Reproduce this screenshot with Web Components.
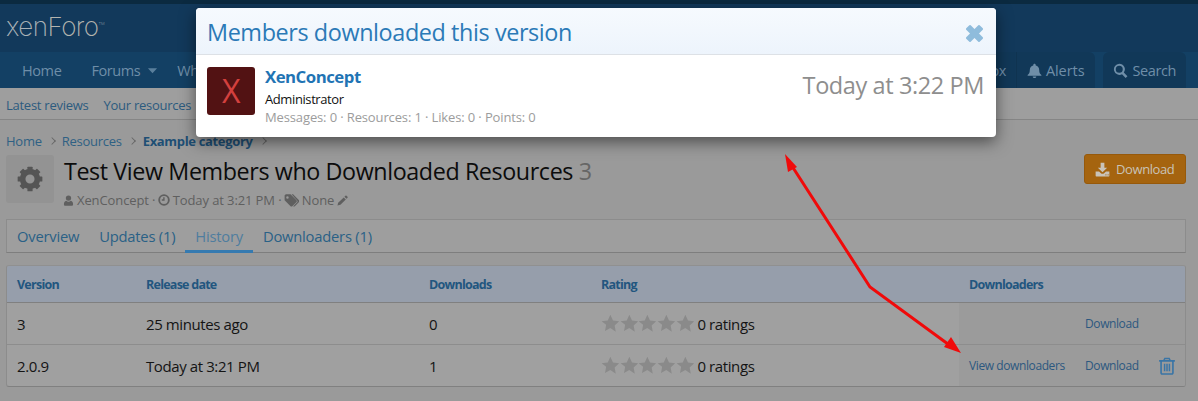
<!DOCTYPE html>
<html lang="en">
<head>
<meta charset="utf-8">
<title>Test View Members who Downloaded Resources</title>
<style>
  html, body { margin: 0; height: 401px; overflow: hidden; background: #9a9a9a; }
  body { font-family: "Open Sans", "Noto Sans", sans-serif; letter-spacing: -0.025em; color: #141414; position: relative; }
</style>
</head>
<body>
<xf-header></xf-header>
<xf-subnav><a>Latest reviews</a><a>Your resources</a></xf-subnav>
<xf-crumbs></xf-crumbs>
<xf-title-bar></xf-title-bar>
<xf-tabs></xf-tabs>
<xf-history>
  <xf-row version="3" date="25 minutes ago" downloads="0"></xf-row>
  <xf-row version="2.0.9" date="Today at 3:21 PM" downloads="1" viewers trash></xf-row>
</xf-history>
<xf-modal title-text="Members downloaded this version">
  <xf-member name="XenConcept" role="Administrator" stats="Messages: 0 · Resources: 1 · Likes: 0 · Points: 0" when="Today at 3:22 PM"></xf-member>
</xf-modal>
<xf-arrows></xf-arrows>

<script>
const ICONS = {
  times: '<rect x="8" y="0" width="8" height="24" rx="1.200" transform="rotate(45 12 12)"/><rect x="8" y="0" width="8" height="24" rx="1.200" transform="rotate(-45 12 12)"/>',
  bell: '<path d="M12 24c1.500 0 2.700-1.100 2.900-2.600H9.100C9.300 22.900 10.500 24 12 24zM23 19.300c-2.600-2.200-3.500-4.800-3.500-8.300 0-3.700-2.300-6.300-5.600-7 .1-.3.1-.5.1-.7C14 2 13.100 1 12 1s-2 1-2 2.300c0 .2 0 .4.1.7-3.300.7-5.600 3.300-5.600 7 0 3.500-.9 6.100-3.500 8.300v1h22z"/>',
  search: '<path fill-rule="evenodd" d="M10 1a9 9 0 0 1 7.300 14.200l5.800 5.800-2.900 2.900-5.800-5.800A9 9 0 1 1 10 1zm0 3.400a5.600 5.600 0 1 0 0 11.200 5.600 5.600 0 0 0 0-11.200z"/>',
  user: '<path d="M12 12.500a5.800 5.800 0 1 0 0-11.600 5.800 5.800 0 0 0 0 11.600zM7.200 12.500C3.500 13 2 16.500 2 20.500 2 22.500 3.300 23.500 5 23.500h14c1.700 0 3-1 3-3 0-4-1.500-7.500-5.200-8-1.200 1.200-2.800 2-4.800 2s-3.600-.8-4.800-2z"/>',
  clock: '<path fill-rule="evenodd" d="M12 .5a11.500 11.500 0 1 1 0 23 11.500 11.500 0 0 1 0-23zm0 3.700a7.800 7.800 0 1 0 0 15.600 7.800 7.800 0 0 0 0-15.600zM10.400 6.500h2.800v6.800H7.500v-2.800h2.900z"/>',
  tags: '<path fill-rule="evenodd" d="M1 3.500 3 2h7.500L20 11.500c.8.800.8 2 0 2.800l-6.700 6.700c-.8.8-2 .8-2.800 0L1 11.500zM5.500 5a2 2 0 1 0 0 4 2 2 0 0 0 0-4z"/><path d="M13 2h2.500L25 11.500c.8.800.8 2 0 2.800L18.300 21c-.7.700-1.800.8-2.600.2L22 14.900c.8-.8.8-2 0-2.800z" transform="translate(-1 0)"/>',
  pencil: '<path d="M18.500 1.500c.6-.6 1.500-.6 2.100 0l2.400 2.400c.6.600.6 1.500 0 2.100l-2.300 2.300-4.500-4.500zM14.700 5.300l4.500 4.500L7.500 21.500 1 23l1.500-6z"/>',
  download: '<path fill-rule="evenodd" d="M9 1h6v8h4.500L12 16.500 4.500 9H9zM1 15h5.500l3 3c1.400 1.300 3.600 1.300 5 0l3-3H23v7c0 .6-.4 1-1 1H2c-.6 0-1-.4-1-1zm16.500 4.500a1 1 0 1 0 0 2 1 1 0 0 0 0-2zm3.500 0a1 1 0 1 0 0 2 1 1 0 0 0 0-2z"/>',
  trash: '<path fill-rule="evenodd" d="M8.500 1h7l1.500 3h5.500v2.200H21V21c0 1.500-1 2.800-2.500 2.800h-13C4 23.800 3 22.500 3 21V6.200H1.500V4H7zM9.800 3l-.7 1h5.800l-.7-1zM5.200 6.200V21c0 .4.2.7.4.7h12.800c.2 0 .4-.3.4-.7V6.200zM7.800 9h2v10h-2zm3.200 0h2v10h-2zm3.200 0h2v10h-2z"/>',
  star: '<path d="M12 1l3.400 7.300 7.900 1-5.800 5.500 1.500 7.900L12 18l-6.900 3.700 1.500-7.900L.8 9.300l7.900-1z"/>',
  caret: '<path d="M2 7h20L12 18z"/>',
  gear: '<g><circle cx="12" cy="12" r="6.800" fill="none" stroke="currentColor" stroke-width="5.200"/>' +
    [0, 45, 90, 135, 180, 225, 270, 315].map(a => `<rect x="9.600" y="0.600" width="4.800" height="5" rx=".6" transform="rotate(${a} 12 12)"/>`).join('') + '</g>'
};

class XfIcon extends HTMLElement {
  static get observedAttributes() {
    return ['name'];
  }

  constructor() {
    super();
    this.attachShadow({ mode: 'open' });
  }

  attributeChangedCallback() {
    this.render();
  }

  connectedCallback() {
    this.render();
  }

  render() {
    const name = this.getAttribute('name');
    this.shadowRoot.innerHTML = `
      <style>
        :host { display: inline-flex; width: var(--icon-size, 14px); height: var(--icon-size, 14px); flex: none; }
        svg { width: 100%; height: 100%; fill: currentColor; display: block; }
      </style>
      <svg viewBox="0 0 24 24" aria-hidden="true">${ICONS[name] || ''}</svg>`;
  }
}

class XfHeader extends HTMLElement {
  constructor() {
    super();
    this.attachShadow({ mode: 'open' });
  }

  connectedCallback() {
    this.shadowRoot.innerHTML = `
      <style>
        :host { display: block; background: #12395b; border-top: 4px solid #0b2a40; }
        .logo { height: 48px; display: flex; align-items: center; padding-left: 6px; box-sizing: border-box; padding-bottom: 3px;
          font: 200 26px/1 "Inter", "Lato", sans-serif; letter-spacing: -0.02em; color: #a9b1b6; }
        .logo b { font-weight: 200; color: #b4b4ae; }
        .logo sup { font-size: 4px; align-self: flex-start; margin: 18px 0 0 0; letter-spacing: 0; }
        nav { height: 36px; display: flex; align-items: stretch; background: #134064; font-size: 14.500px; color: #6f8ea8; }
        a { display: flex; align-items: center; gap: 8px; }
        .left { display: flex; padding-left: 22px; gap: 30px; }
        .forums { margin-right: -11px; }
        .caret { --icon-size: 11px; color: #5a7f9c; margin-left: -1px; }
        .right { margin-left: auto; display: flex; gap: 8px; padding-right: 12px; }
        .group { display: flex; align-items: center; background: #113858; border-radius: 6px 6px 0 0; padding: 0 10px; gap: 4px; --icon-size: 15px; color: #6f8ea8; }
        .inbox { width: 178px; box-sizing: border-box; justify-content: flex-end; gap: 0; }
        .sep { width: 1px; align-self: stretch; background: #0f3350; margin: 0 10px; }
        .alerts { display: flex; align-items: center; gap: 4px; margin-right: 1px; letter-spacing: -0.005em; }
      </style>
      <div class="logo"><span>xen</span><b>Foro</b><sup>TM</sup></div>
      <nav>
        <div class="left">
          <a>Home</a>
          <a class="forums">Forums <xf-icon class="caret" name="caret"></xf-icon></a>
          <a>What's new</a>
        </div>
        <div class="right">
          <div class="group inbox"><span>Inbox</span><span class="sep"></span><span class="alerts"><xf-icon name="bell"></xf-icon>Alerts</span></div>
          <div class="group"><xf-icon name="search"></xf-icon>Search</div>
        </div>
      </nav>`;
  }
}

class XfSubnav extends HTMLElement {
  constructor() {
    super();
    this.attachShadow({ mode: 'open' });
    this.shadowRoot.innerHTML = `
      <style>
        :host { display: flex; height: 29px; padding: 2px 0 0 6px; align-items: center; gap: 15px;
          background: #9e9e9e; border-bottom: 1px solid #858585; font-size: 13px; letter-spacing: -0.02em; color: #2c5b7e; }
      </style>
      <slot></slot>`;
  }
}

class XfCrumbs extends HTMLElement {
  constructor() {
    super();
    this.attachShadow({ mode: 'open' });
    this.shadowRoot.innerHTML = `
      <style>
        :host { display: flex; align-items: center; height: 18px; margin-top: 12px; padding-left: 6px; gap: 7px; font-size: 13px; color: #2f6184; letter-spacing: -0.02em; }
        span:first-child { margin-right: 1px; letter-spacing: -0.04em; }
        b { color: #1e4f75; letter-spacing: -0.026em; margin-left: 1px; }
        i { font-style: normal; width: 5px; height: 5px; border: solid #666; border-width: 1px 1px 0 0; transform: rotate(45deg) scale(.9); }
      </style>
      <span>Home</span><i></i><span>Resources</span><i></i><b>Example category</b><i></i>`;
  }
}

class XfTitleBar extends HTMLElement {
  constructor() {
    super();
    this.attachShadow({ mode: 'open' });
    this.shadowRoot.innerHTML = `
      <style>
        :host { display: flex; padding: 5px 12px 0 6px; height: 66px; box-sizing: border-box; }
        .box { width: 48px; height: 48px; background: #939393; border-radius: 3px; display: flex; align-items: center; justify-content: center; color: #555; --icon-size: 26px; flex: none; }
        .main { margin-left: 10px; flex: 1; }
        h1 { margin: 0; font-size: 23.300px; font-weight: 400; line-height: 32px; color: #0c0c0c; }
        h1 span { color: #666; }
        .meta { display: flex; align-items: center; gap: 3px; margin: 4px 0 0 -1px; font-size: 13px; letter-spacing: -0.008em; color: #5f5f5f; --icon-size: 12px; white-space: pre; }
        .meta .s { margin-right: -4px; }
        .dl { align-self: flex-start; height: 30px; margin-top: -1px; width: 102px; box-sizing: border-box; background: #a5640f; border: 1px solid #96590b; border-radius: 3px;
          display: flex; align-items: center; gap: 6px; padding-left: 10px; color: #c9c3b8; font-size: 13px; --icon-size: 15px; }
      </style>
      <div class="box"><xf-icon name="gear"></xf-icon></div>
      <div class="main">
        <h1>Test View Members who Downloaded Resources <span>3</span></h1>
        <div class="meta"><xf-icon name="user" style="--icon-size:11px"></xf-icon><span class="s">XenConcept · </span><xf-icon name="clock"></xf-icon><span class="s">Today at 3:21 PM · </span><xf-icon name="tags" style="--icon-size:15px"></xf-icon><span>None</span><xf-icon name="pencil" style="--icon-size:11px"></xf-icon></div>
      </div>
      <div class="dl"><xf-icon name="download"></xf-icon>Download</div>`;
  }
}

class XfTabs extends HTMLElement {
  constructor() {
    super();
    this.attachShadow({ mode: 'open' });
    this.shadowRoot.innerHTML = `
      <style>
        :host { display: flex; margin: 3px 12px 0 6px; height: 34px; box-sizing: border-box; background: #9e9e9e; border: 1px solid #8c8c8c; border-bottom-color: #7e7e7e; font-size: 14.750px; letter-spacing: -0.015em; color: #2a6186; }
        a { display: flex; align-items: center; padding: 2px 10px 0; border-bottom: 3px solid transparent; margin-bottom: -1px; }
        a.on { color: #4f7d9f; border-bottom-color: #357ab0; }
      </style>
      <a>Overview</a><a>Updates (1)</a><a class="on">History</a><a>Downloaders (1)</a>`;
  }
}

const HISTORY_COLS = 'grid-template-columns: 129px 283px 172px 368px 226px;';

class XfHistory extends HTMLElement {
  constructor() {
    super();
    this.attachShadow({ mode: 'open' });
    this.shadowRoot.innerHTML = `
      <style>
        :host { display: block; margin: 12px 12px 0 6px; border: 1px solid #8c8c8c; border-top-color: #909090; border-bottom-color: #808080; border-radius: 3px; background: #a0a0a0; overflow: hidden; }
        .head { display: grid; ${HISTORY_COLS} height: 36px; align-items: center; background: #969eab; border-bottom: 1px solid #808080; font-size: 12.500px; font-weight: 700; letter-spacing: -0.06em; color: #22567f; }
        .head span { padding-left: 10px; }
      </style>
      <div class="head"><span>Version</span><span>Release date</span><span>Downloads</span><span>Rating</span><span>Downloaders</span></div>
      <slot></slot>`;
  }
}

class XfRow extends HTMLElement {
  constructor() {
    super();
    this.attachShadow({ mode: 'open' });
  }

  connectedCallback() {
    const stars = Array(5).fill().map(() => '<xf-icon name="star"></xf-icon>').join('');
    this.shadowRoot.innerHTML = `
      <style>
        :host { display: grid; ${HISTORY_COLS} height: 42px; font-size: 15px; border-bottom: 1px solid #8d8d8d; box-sizing: border-box; color: #141414; }
        :host(:last-child) { border-bottom: 0; height: 41px; }
        .c { display: flex; align-items: center; padding: 1px 0 0 10px; }
        .stars { display: flex; color: #8a8a8a; --icon-size: 18.700px; margin: -2px 3px 0 0; }
        .links { background: #9b9b9b; font-size: 12px; color: #2c5880; padding: 0 0 1px 10px; position: relative; }
        .view { width: 116px; flex: none; }
        .tr { --icon-size: 18px; color: #3a75a6; margin: 1px 0 0 19px; }
      </style>
      <div class="c">${this.getAttribute('version')}</div>
      <div class="c">${this.getAttribute('date')}</div>
      <div class="c">${this.getAttribute('downloads')}</div>
      <div class="c"><span class="stars">${stars}</span>0 ratings</div>
      <div class="c links">
        <span class="view">${this.hasAttribute('viewers') ? 'View downloaders' : ''}</span>
        <span>Download</span>
        ${this.hasAttribute('trash') ? '<xf-icon class="tr" name="trash"></xf-icon>' : ''}
      </div>`;
  }
}

class XfModal extends HTMLElement {
  constructor() {
    super();
    this.attachShadow({ mode: 'open' });
  }

  connectedCallback() {
    this.shadowRoot.innerHTML = `
      <style>
        :host { display: block; position: absolute; left: 196px; top: 8px; width: 800px; height: 129px; box-sizing: border-box; background: #fff; border-radius: 4px; overflow: hidden;
          box-shadow: 0 5px 16px rgba(0,0,0,.5); }
        header { height: 47px; box-sizing: border-box; display: flex; align-items: center; justify-content: space-between; padding: 2px 12px 0 11px;
          background: linear-gradient(#f6fafe, #edf4fc); border-bottom: 1px solid #dde1e6; color: #2b7ab7; font-size: 23.400px; }
        xf-icon { --icon-size: 19px; color: #8fbcdc; margin-top: 2px; }
      </style>
      <header><span>${this.getAttribute('title-text')}</span><xf-icon name="times"></xf-icon></header>
      <slot></slot>`;
  }
}

class XfMember extends HTMLElement {
  constructor() {
    super();
    this.attachShadow({ mode: 'open' });
  }

  connectedCallback() {
    this.shadowRoot.innerHTML = `
      <style>
        :host { display: flex; padding: 12px 12px 0 11px; }
        .ava { width: 48px; height: 48px; border-radius: 3px; background: #521213; color: #d3403e; font-size: 32px; line-height: 48px; text-align: center; flex: none; }
        .info { margin-left: 10px; flex: 1; }
        .name { font-size: 16.800px; font-weight: 700; color: #1f74b4; line-height: 21px; letter-spacing: -0.03em; margin-top: -1px; }
        .role { font-size: 13px; color: #111; line-height: 20px; margin-top: 2px; }
        .stats { font-size: 13px; letter-spacing: -0.01em; color: #9c9c9c; line-height: 17px; }
        .when { font-size: 23.500px; color: #8e8e8e; line-height: 37px; }
      </style>
      <div class="ava">X</div>
      <div class="info">
        <div class="name">${this.getAttribute('name')}</div>
        <div class="role">${this.getAttribute('role')}</div>
        <div class="stats">${this.getAttribute('stats')}</div>
      </div>
      <div class="when">${this.getAttribute('when')}</div>`;
  }
}

class XfArrows extends HTMLElement {
  constructor() {
    super();
    this.attachShadow({ mode: 'open' });
    this.shadowRoot.innerHTML = `
      <style>
        :host { display: block; position: absolute; left: 0; top: 0; width: 1198px; height: 401px; pointer-events: none; }
        svg { display: block; }
      </style>
      <svg width="1198" height="401" viewBox="0 0 1198 401">
        <polyline points="790,163 870,287 952,347" fill="none" stroke="#f00a0a" stroke-width="3"/>
        <polygon points="785,154 797,167 788,172" fill="#f00a0a"/>
        <polygon points="961,353 944,347 951,337" fill="#f00a0a"/>
      </svg>`;
  }
}

customElements.define('xf-icon', XfIcon);
customElements.define('xf-header', XfHeader);
customElements.define('xf-subnav', XfSubnav);
customElements.define('xf-crumbs', XfCrumbs);
customElements.define('xf-title-bar', XfTitleBar);
customElements.define('xf-tabs', XfTabs);
customElements.define('xf-history', XfHistory);
customElements.define('xf-row', XfRow);
customElements.define('xf-modal', XfModal);
customElements.define('xf-member', XfMember);
customElements.define('xf-arrows', XfArrows);
</script>
</body>
</html>
